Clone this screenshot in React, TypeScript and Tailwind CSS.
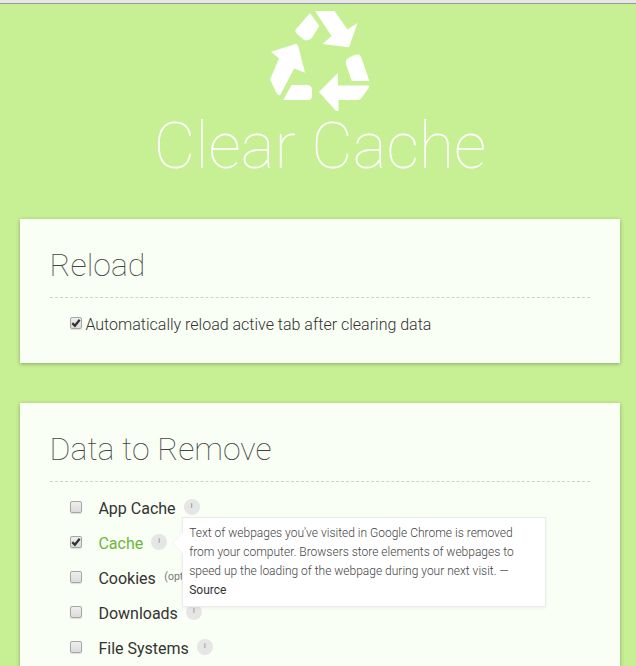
import React from "react";

function Check({ on = false }: { on?: boolean }) {
  return (
    <span className="block h-[12px] w-[12px] shrink-0 rounded-[2px] border border-[#a6a6a6] bg-linear-to-b from-[#eeeeee] to-[#dcdcdc] shadow-[0_1px_1px_rgba(0,0,0,0.12)]">
      {on && (
        <svg viewBox="0 0 10 10" className="block h-[10px] w-[10px] overflow-visible">
          <path d="M1.3 5.1 3.9 7.8 8.7 1.7" fill="none" stroke="#333" strokeWidth="2.3" />
        </svg>
      )}
    </span>
  );
}

function Info() {
  return (
    <span className="flex h-4 w-4 shrink-0 items-center justify-center rounded-full bg-[#e6e6e6]">
      <span className="text-[7px] leading-none text-[#777]">i</span>
    </span>
  );
}

function Panel({ title, children, className }: { title: string; children: React.ReactNode; className: string }) {
  return (
    <section className={`mx-auto w-[600px] bg-[#f9fff4] px-[30px] pt-[27px] shadow-[0_1px_4px_rgba(0,0,0,0.3)] ${className}`}>
      <h2 className="h-[52px] border-b border-dashed border-[#ccd3c9] text-[32px] leading-[38px] font-thin text-[#444]">
        <span className="-ml-[0.4px]">{title}</span>
      </h2>
      {children}
    </section>
  );
}

function Tooltip() {
  return (
    <div className="absolute top-[-17px] left-[31px] z-10 h-[90px] w-[364px] border border-[#ebebeb] bg-white pt-[6px] pl-[6px] text-[12px] leading-[19px] font-light whitespace-nowrap text-[#444] shadow-[0_1px_3px_rgba(0,0,0,0.06)]">
      <svg className="absolute top-[13px] left-[-11px] h-[24px] w-[12px]" viewBox="0 0 12 24">
        <path d="M12 0 0 12 12 24Z" fill="#fff" />
        <path d="M11 1 .5 12 11 23" fill="none" stroke="#f0f0f0" />
      </svg>
      <p>Text of webpages you've visited in Google Chrome is removed</p>
      <p>from your computer. Browsers store elements of webpages to</p>
      <p>speed up the loading of the webpage during your next visit. —</p>
      <p className="font-normal text-[#333]">Source</p>
    </div>
  );
}

type Item = { label: string; on?: boolean; note?: string };

const items: Item[] = [
  { label: "App Cache" },
  { label: "Cache", on: true },
  { label: "Cookies", note: "(opt" },
  { label: "Downloads" },
  { label: "File Systems" },
];

export default function App() {
  return (
    <main className="h-[666px] w-[636px] overflow-hidden bg-[#c7f094] font-['Roboto',sans-serif]">
      <div className="h-1 border-b border-[#999] bg-[#e6e6e6]" />
      <div className="pl-1">
        <header className="flex h-[215px] flex-col items-center pt-[6px]">
          <svg viewBox="0 0 120 120" className="mt-[-10px] h-[120px] w-[120px] shrink-0 fill-white">
            <path d="M50 13 59.3 26 52 37.8Q48.5 41.5 44 40L36 33Q34.5 31 36.5 28.5Z" />
            <path d="M55 11H74.5L87.5 29.5 97.5 23 89 47.3 62.5 44 71.5 36Z" />
            <path d="M11 51.8 35.5 44Q37.5 43.8 38.2 46L45 72.8 34.2 68.5 20 95.3Q18 95.5 16.5 93L10 79.5 19 58.5Z" />
            <path d="M31.5 85H47.5Q52 85.5 52 90V96Q52 100 48 100H23.3Z" />
            <path d="M77.8 73V85.6H109.3L108.8 88 101 98.5Q100 100 97 100H78.5V111H76L59 92Z" />
            <path d="M86.5 59.5Q93 54.5 98.8 54.5 100.5 55.5 101.5 58L109.3 81H91.8L86 64Q85.5 61 86.5 59.5Z" />
          </svg>
          <h1 className="mt-[-11px] text-[64px] leading-[76px] font-thin whitespace-nowrap text-white">Clear Cache</h1>
        </header>
        <Panel title="Reload" className="h-[144px]">
          <div className="flex h-[49px] items-center gap-[3.4px] pl-5 text-[16px] font-light text-[#333]">
            <Check on />
            <span className="mt-[4px]">Automatically reload active tab after clearing data</span>
          </div>
        </Panel>
        <Panel title="Data to Remove" className="mt-10 h-[400px]">
          <ul className="pt-[7px] pl-5">
            {items.map(({ label, on, note }) => (
              <li key={label} className="flex h-[35px] items-center">
                <Check on={on} />
                <span className={`mt-[4px] mr-[8px] ml-[16.4px] text-[16px] leading-[20px] whitespace-nowrap ${on ? "text-[#6eb53a]" : "text-[#333]"}`}>
                  {label}
                </span>
                {note ? (
                  <span className="ml-[0.5px] text-[10.5px] text-[#777]">{note}</span>
                ) : (
                  <span className="relative">
                    <Info />
                    {on && <Tooltip />}
                  </span>
                )}
              </li>
            ))}
          </ul>
        </Panel>
      </div>
    </main>
  );
}
